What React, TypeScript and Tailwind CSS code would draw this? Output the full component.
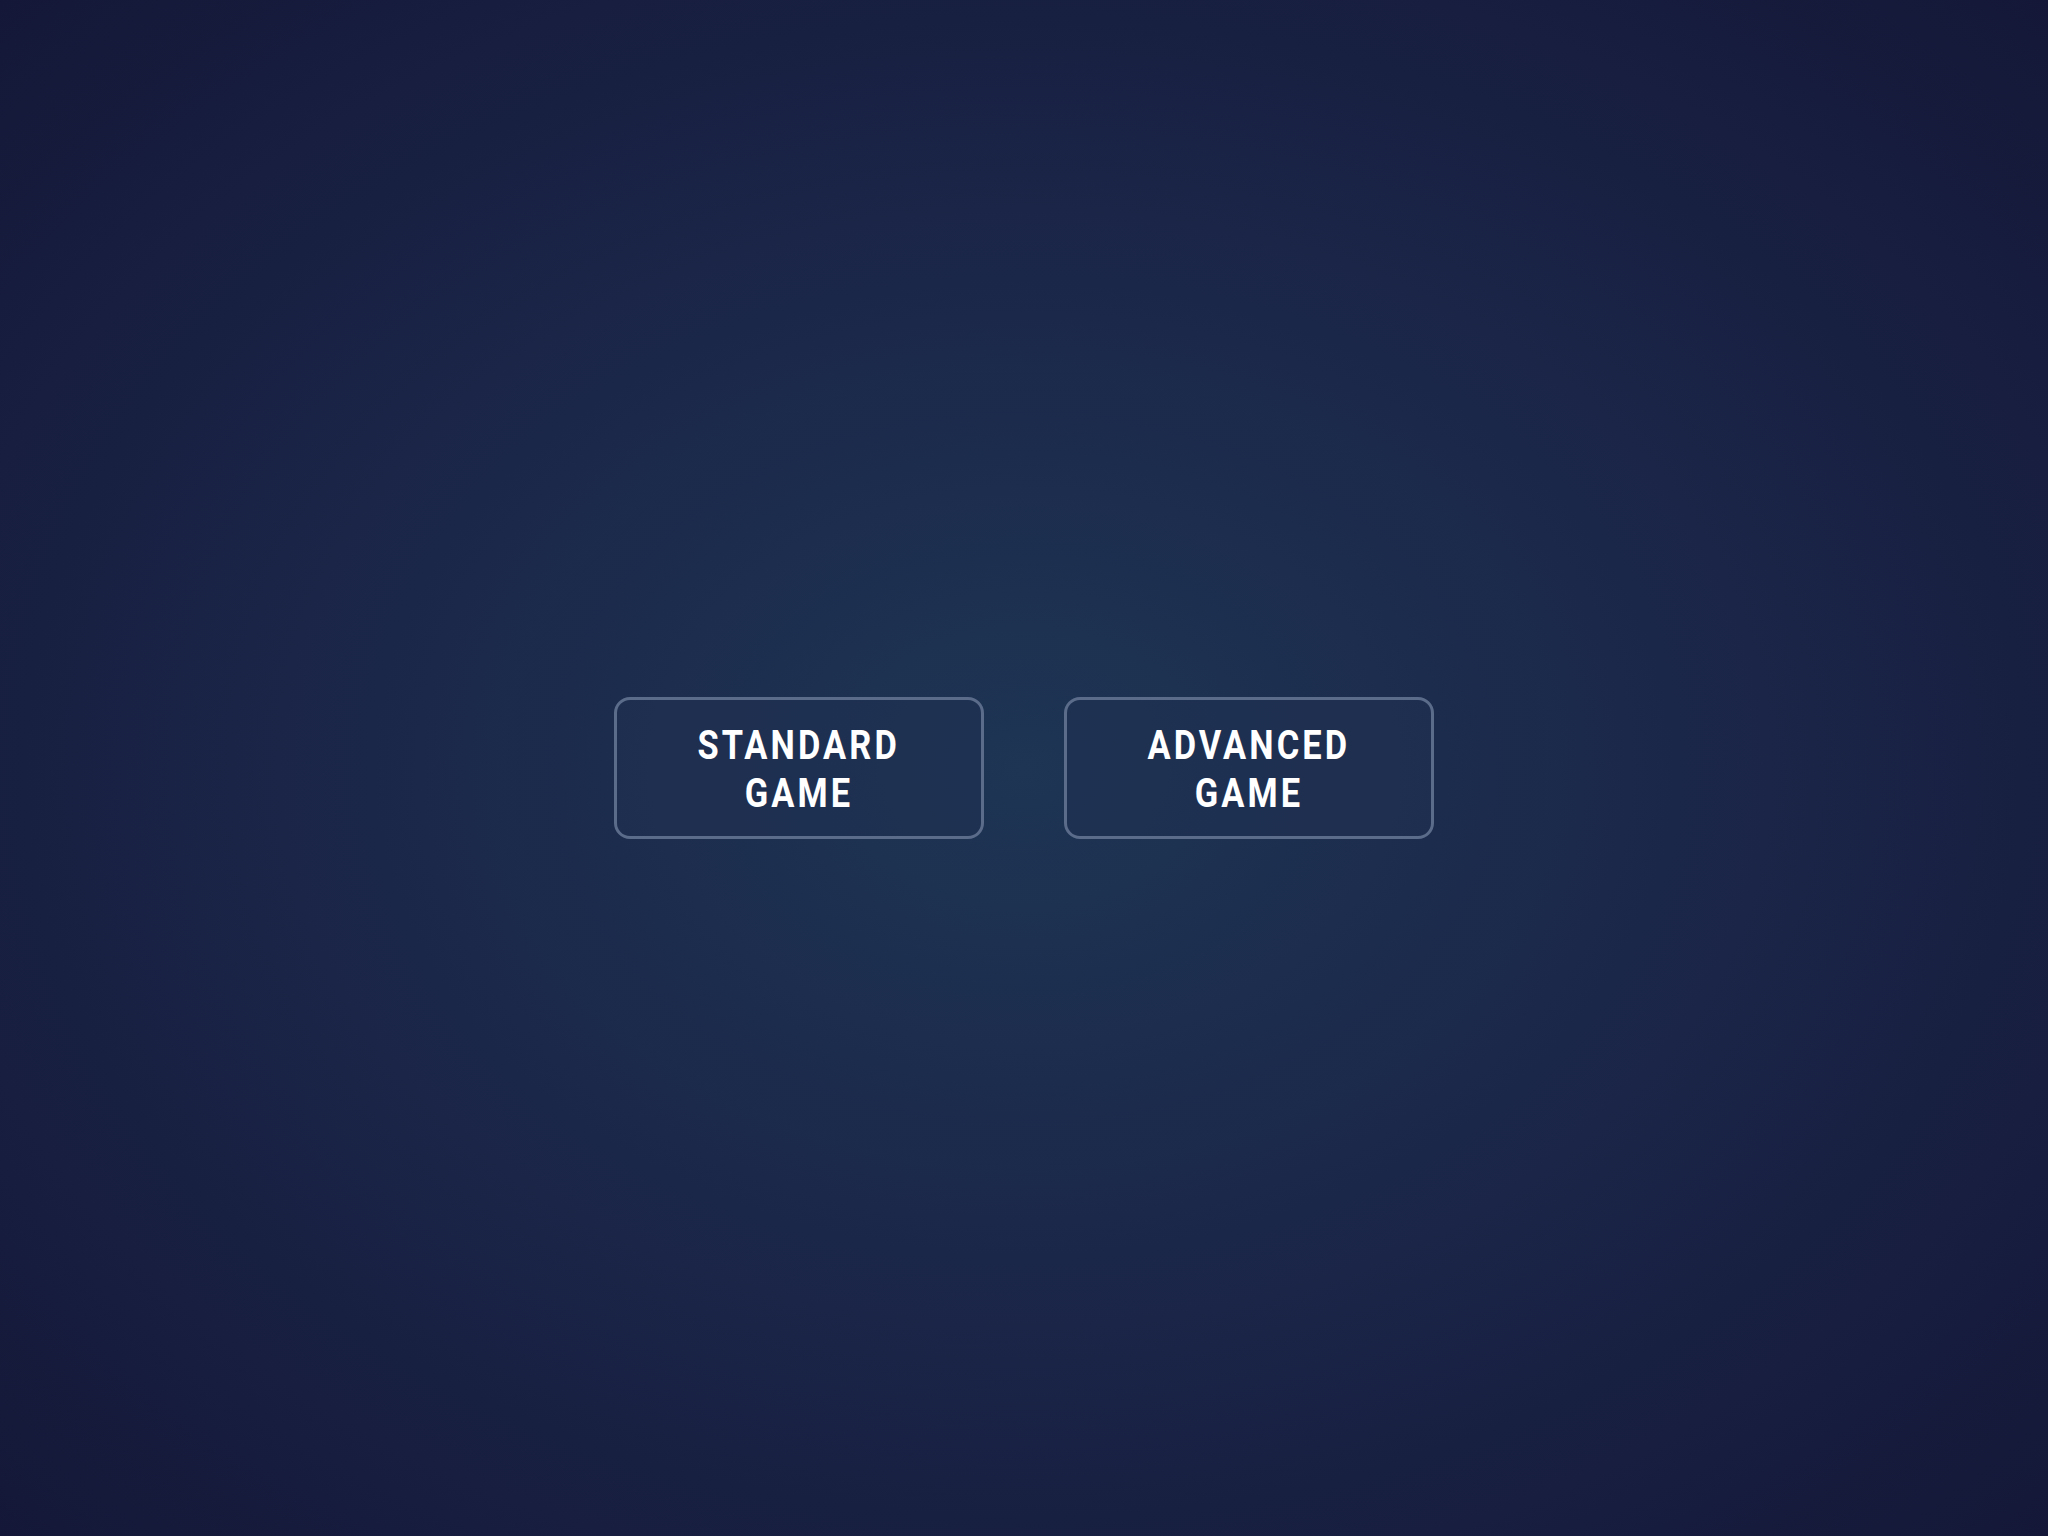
export default function App() {
  const modes = [
    { top: 'STANDARD', bottom: 'GAME' },
    { top: 'ADVANCED', bottom: 'GAME' },
  ];

  return (
    <div className="min-h-screen w-full flex items-center justify-center bg-[radial-gradient(ellipse_at_center,#1e3554_0%,#1b2749_45%,#141738_100%)] font-['Roboto',sans-serif]">
      <div className="flex gap-20">
        {modes.map((m) => (
          <button
            key={m.top}
            className="w-[370px] h-[142px] pt-1 rounded-2xl border-[3px] border-[#5b6b8a] bg-[#1f3152]/60 text-white font-bold text-[40px] leading-[48px] tracking-[0.09em] flex flex-col items-center justify-center"
          >
            <span className="scale-x-[0.86]">{m.top}</span>
            <span className="scale-x-[0.86]">{m.bottom}</span>
          </button>
        ))}
      </div>
    </div>
  );
}
